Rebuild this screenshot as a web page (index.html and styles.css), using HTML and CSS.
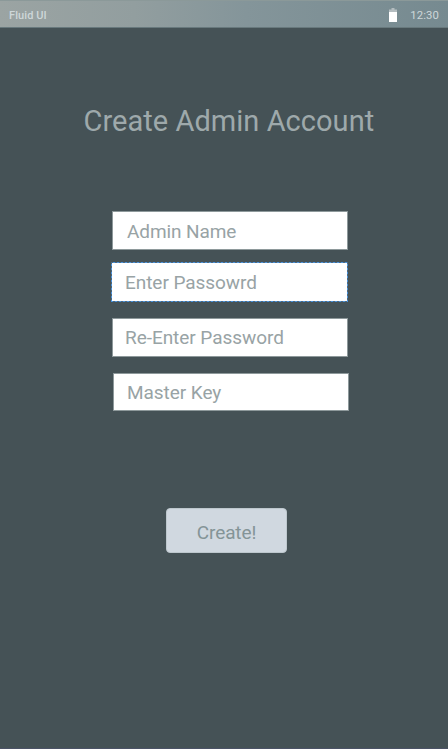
FILE: index.html
```html
<!DOCTYPE html>
<html lang="en">
<head>
<meta charset="utf-8">
<title>Create Admin Account</title>
<link rel="stylesheet" href="styles.css">
</head>
<body>
<header class="status">
  <span class="app">Fluid UI</span>
  <svg class="battery" width="8" height="15" viewBox="0 0 8 15"><path fill="#b4bdc0" d="M2.5 0h3v1.5H8V5H0V1.5h2.5z"/><path fill="#fff" d="M0 4h8v10H0z"/></svg>
  <span class="time">12:30</span>
</header>
<main class="screen">
  <h1 class="title">Create Admin Account</h1>
  <form class="form">
    <div class="field name">Admin Name</div>
    <div class="field password">Enter Passowrd</div>
    <div class="field repeat">Re-Enter Password</div>
    <div class="field key">Master Key</div>
    <button class="create" type="button">Create!</button>
  </form>
</main>
<div class="edge"></div>
</body>
</html>
```
FILE: styles.css
```css
* { box-sizing: border-box; }
body {
  display: flex;
  flex-direction: column;
  margin: 0;
  height: 749px;
  overflow: hidden;
  background: #455256;
  font-family: Roboto, sans-serif;
}
.screen { flex: 1; }
.edge { height: 1px; background: #4b5366; }
.status {
  display: flex;
  align-items: center;
  height: 28px;
  padding: 2px 9px 0 9px;
  background: linear-gradient(90deg, #9ba4a3 0%, #929e9f 30%, #84959a 55%, #768a90 100%);
  border-top: 1px solid #8b9999;
  border-bottom: 1px solid #68797d;
  font-size: 11px;
  font-weight: 500;
  letter-spacing: 0.1px;
  color: #ced7d9;
}
.app { flex: 1; }
.battery { margin-right: 13px; }
.time { font-size: 11.3px; font-weight: 400; }
.title {
  margin: 75px 0 0 83.5px;
  height: 36px;
  line-height: 36px;
  font-size: 29px;
  font-weight: 400;
  letter-spacing: 0.04px;
  color: #9ea9ab;
  white-space: nowrap;
}
.form {
  display: flex;
  flex-direction: column;
  margin: 72px 0 0 112px;
}
.field {
  width: 236px;
  height: 39px;
  padding-left: 14px;
  border: 1px solid #8e999b;
  background: #fff;
  color: #98a3a5;
  font-size: 19px;
  letter-spacing: -0.05px;
  line-height: 38px;
}
.name { line-height: 40px; letter-spacing: -0.1px; }
.password {
  width: 237px;
  height: 40px;
  margin: 12px 0 0 -1px;
  padding-left: 13px;
  border-color: transparent;
  background:
    linear-gradient(#fff, #fff) padding-box,
    repeating-conic-gradient(#4a93dd 0 25%, #4d6a82 0 50%) 0 0 / 4px 4px border-box;
  line-height: 40px;
}
.repeat { margin-top: 16px; padding-left: 12px; }
.key { margin: 16px 0 0 1px; padding-left: 13px; height: 38px; }
.create {
  width: 121px;
  height: 45px;
  margin: 97px 0 0 54px;
  padding: 3px 0 0;
  border: 1px solid #bdc7cd;
  border-radius: 4px;
  background: #d0d8e0;
  color: #849497;
  font: 19px Roboto, sans-serif;
  letter-spacing: -0.1px;
}
```
